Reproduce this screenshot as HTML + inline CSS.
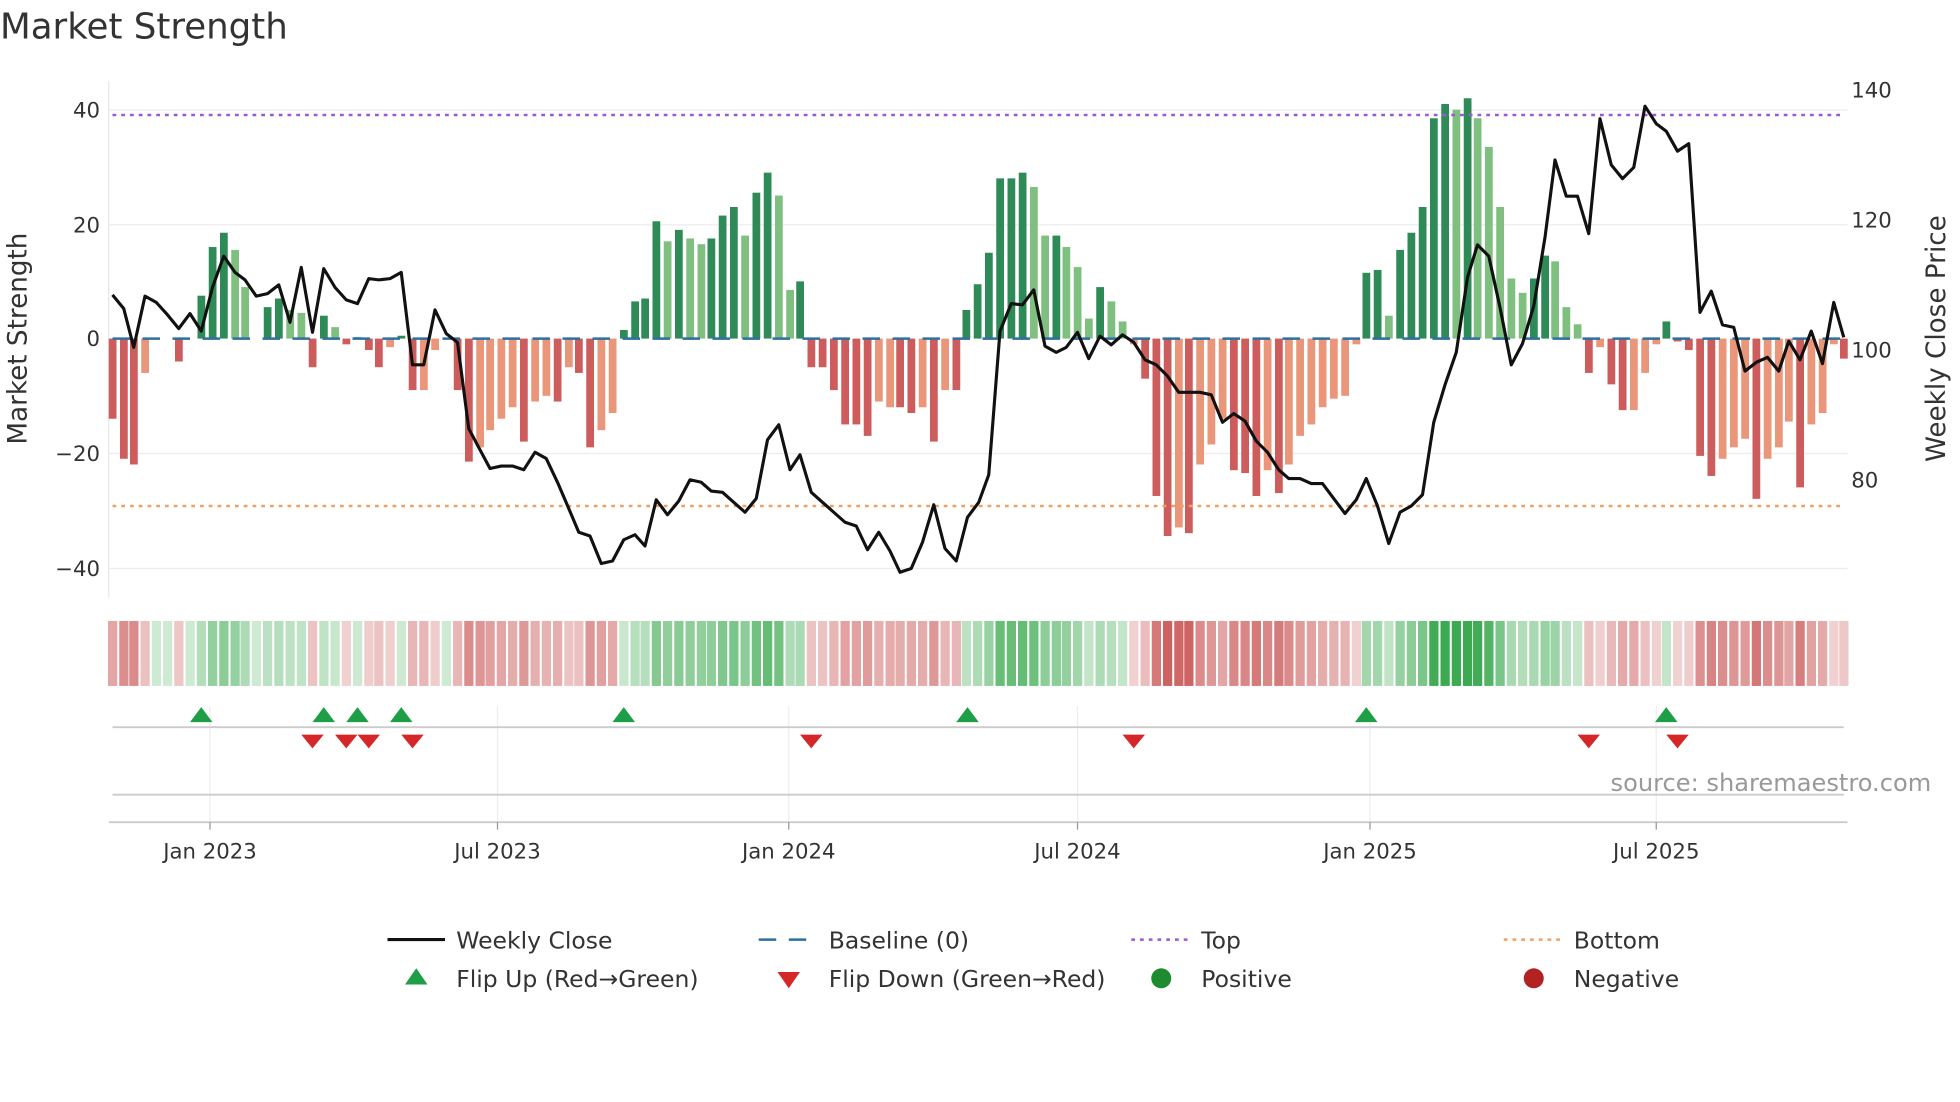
<!DOCTYPE html>
<html><head><meta charset="utf-8"><style>
html,body{margin:0;padding:0;background:#fff;}
svg{display:block;font-family:"DejaVu Sans","Liberation Sans",sans-serif;}
</style></head><body>
<svg id="s" width="1960" height="1102" viewBox="0 0 1568 882" preserveAspectRatio="none" xmlns="http://www.w3.org/2000/svg">
<rect width="1568" height="882" fill="#fff"/>
<text x="0" y="31" font-size="28.5" fill="#333">Market Strength</text>
<g stroke="#ececf0" stroke-width="1">
<line x1="87" y1="88" x2="1478" y2="88"/><line x1="87" y1="180" x2="1478" y2="180"/>
<line x1="87" y1="363" x2="1478" y2="363"/><line x1="87" y1="455" x2="1478" y2="455"/>
</g>
<line x1="87" y1="65" x2="87" y2="478" stroke="#e6e6ea"/>
<g font-size="17" fill="#333" text-anchor="end">
<text x="80" y="94">40</text><text x="80" y="186">20</text><text x="80" y="277">0</text><text x="80" y="369">−20</text><text x="80" y="461">−40</text>
</g>
<g font-size="17" fill="#333">
<text x="1481" y="78">140</text><text x="1481" y="182">120</text><text x="1481" y="286">100</text><text x="1481" y="390">80</text>
</g>
<text transform="translate(21,271) rotate(-90)" font-size="21" fill="#333" text-anchor="middle">Market Strength</text>
<text transform="translate(1556,271) rotate(-90)" font-size="21" fill="#333" text-anchor="middle">Weekly Close Price</text>
<g id="bars"></g>
<line x1="90" y1="271" x2="1475" y2="271" stroke="#2f6fa0" stroke-width="2" stroke-dasharray="14,10"/>
<line x1="90" y1="92" x2="1475" y2="92" stroke="#9b59d6" stroke-width="2" stroke-dasharray="3,4"/>
<line x1="90" y1="405" x2="1475" y2="405" stroke="#f0a060" stroke-width="2" stroke-dasharray="3,4"/>
<polyline id="price" fill="none" stroke="#111" stroke-width="2.5" stroke-linejoin="round"/>
<g id="heat"></g>
<g stroke="#eee"><line x1="168" y1="565" x2="168" y2="658"/><line x1="398" y1="565" x2="398" y2="658"/><line x1="631" y1="565" x2="631" y2="658"/><line x1="862" y1="565" x2="862" y2="658"/><line x1="1096" y1="565" x2="1096" y2="658"/><line x1="1325" y1="565" x2="1325" y2="658"/></g>
<line x1="90" y1="582" x2="1475" y2="582" stroke="#ccc" stroke-width="1.5"/>
<line x1="90" y1="636" x2="1475" y2="636" stroke="#ccc" stroke-width="1.5"/>
<line x1="87" y1="658" x2="1478" y2="658" stroke="#ccc" stroke-width="1.5"/>
<g id="marks"></g>
<text x="1545" y="633" font-size="19.3" fill="#999" text-anchor="end">source: sharemaestro.com</text>
<g stroke="#999"><line x1="168" y1="658" x2="168" y2="664"/><line x1="398" y1="658" x2="398" y2="664"/><line x1="631" y1="658" x2="631" y2="664"/><line x1="862" y1="658" x2="862" y2="664"/><line x1="1096" y1="658" x2="1096" y2="664"/><line x1="1325" y1="658" x2="1325" y2="664"/></g>
<g font-size="17" fill="#333" text-anchor="middle">
<text x="168" y="687">Jan 2023</text><text x="398" y="687">Jul 2023</text><text x="631" y="687">Jan 2024</text><text x="862" y="687">Jul 2024</text><text x="1096" y="687">Jan 2025</text><text x="1325" y="687">Jul 2025</text>
</g>
<g font-size="18.8" fill="#333">
<line x1="310" y1="752" x2="356" y2="752" stroke="#111" stroke-width="2.5"/><text x="365" y="759">Weekly Close</text>
<line x1="607" y1="752" x2="652" y2="752" stroke="#2f6fa0" stroke-width="2" stroke-dasharray="14,10"/><text x="663" y="759">Baseline (0)</text>
<line x1="905" y1="752" x2="950" y2="752" stroke="#9b59d6" stroke-width="2" stroke-dasharray="3,4"/><text x="961" y="759">Top</text>
<line x1="1203" y1="752" x2="1248" y2="752" stroke="#f0a060" stroke-width="2" stroke-dasharray="3,4"/><text x="1259" y="759">Bottom</text>
<polygon points="324,788 342,788 333,775" fill="#1e9e46"/><text x="365" y="790">Flip Up (Red→Green)</text>
<polygon points="622,778 640,778 631,791" fill="#d62728"/><text x="663" y="790">Flip Down (Green→Red)</text>
<circle cx="929" cy="783" r="8" fill="#1e8c2e"/><text x="961" y="790">Positive</text>
<circle cx="1227" cy="783" r="8" fill="#b22222"/><text x="1259" y="790">Negative</text>
</g>
</svg>
<script>
var NS="http://www.w3.org/2000/svg";
function el(t,a,p){var e=document.createElementNS(NS,t);for(var k in a)e.setAttribute(k,a[k]);p.appendChild(e);return e;}
var B=[[90,-14,'d'],[99,-21,'d'],[107,-22,'d'],[116,-6,'l'],[125,0,'l'],[134,0,'l'],[143,-4,'d'],[152,0,'l'],[161,7.5,'d'],[170,16,'d'],[179,18.5,'d'],[188,15.5,'l'],[196,9,'l'],[205,0,'l'],[214,5.5,'d'],[223,7,'d'],[232,5,'l'],[241,4.5,'l'],[250,-5,'d'],[259,4,'d'],[268,2,'l'],[277,-1,'d'],[286,0.3,'l'],[295,-2,'d'],[303,-5,'d'],[312,-1.5,'l'],[321,0.5,'d'],[330,-9,'d'],[339,-9,'l'],[348,-2,'l'],[357,0,'l'],[366,-9,'d'],[375,-21.5,'d'],[384,-19,'l'],[392,-16,'l'],[401,-14,'l'],[410,-12,'l'],[419,-18,'d'],[428,-11,'l'],[437,-10,'l'],[446,-11,'d'],[455,-5,'l'],[463,-6,'d'],[472,-19,'d'],[481,-16,'l'],[490,-13,'l'],[499,1.5,'d'],[508,6.5,'d'],[516,7,'d'],[525,20.5,'d'],[534,17,'l'],[543,19,'d'],[552,17.5,'l'],[561,16.5,'l'],[569,17.5,'d'],[578,21.5,'d'],[587,23,'d'],[596,18,'l'],[605,25.5,'d'],[614,29,'d'],[623,25,'l'],[632,8.5,'l'],[640,10,'d'],[649,-5,'d'],[658,-5,'d'],[667,-9,'d'],[676,-15,'d'],[685,-15,'d'],[694,-17,'d'],[703,-11,'l'],[712,-12,'l'],[720,-12,'d'],[729,-13,'d'],[738,-12,'l'],[747,-18,'d'],[756,-9,'l'],[765,-9,'d'],[773,5,'d'],[782,9.5,'d'],[791,15,'d'],[800,28,'d'],[809,28,'d'],[818,29,'d'],[827,26.5,'l'],[836,18,'l'],[845,18,'d'],[853,16,'l'],[862,12.5,'l'],[871,3.5,'l'],[880,9,'d'],[889,6.5,'l'],[898,3,'l'],[907,-1,'l'],[916,-7,'d'],[925,-27.5,'d'],[934,-34.5,'d'],[943,-33,'l'],[951,-34,'d'],[960,-22,'l'],[969,-18.5,'l'],[978,-14,'l'],[987,-23,'d'],[996,-23.5,'d'],[1005,-27.5,'d'],[1014,-23,'l'],[1023,-27,'d'],[1031,-22,'l'],[1040,-17,'l'],[1049,-15,'l'],[1058,-12,'l'],[1067,-10.5,'l'],[1076,-10,'l'],[1085,-1,'l'],[1093,11.5,'d'],[1102,12,'d'],[1111,4,'l'],[1120,15.5,'d'],[1129,18.5,'d'],[1138,23,'d'],[1147,38.5,'d'],[1156,41,'d'],[1165,40,'l'],[1174,42,'d'],[1182,38.5,'l'],[1191,33.5,'l'],[1200,23,'l'],[1209,10.5,'l'],[1218,8,'l'],[1227,10.5,'d'],[1236,14.5,'d'],[1244,13.5,'l'],[1253,5.5,'l'],[1262,2.5,'l'],[1271,-6,'d'],[1280,-1.5,'l'],[1289,-8,'d'],[1298,-12.5,'d'],[1307,-12.5,'l'],[1316,-6,'l'],[1325,-1,'l'],[1333,3,'d'],[1342,-0.5,'d'],[1351,-2,'d'],[1360,-20.5,'d'],[1369,-24,'d'],[1378,-21,'l'],[1387,-19,'l'],[1396,-17.5,'l'],[1405,-28,'d'],[1414,-21,'l'],[1423,-19,'l'],[1431,-14.5,'l'],[1440,-26,'d'],[1449,-15,'l'],[1458,-13,'l'],[1467,-1,'l'],[1475,-3.5,'d']];
var g=document.getElementById('bars'),h=document.getElementById('heat');
var col={pd:'#2e8b57',pl:'#7fbf7f',nd:'#cd5c5c',nl:'#e9967a'};
for(var i=0;i<B.length;i++){var x=B[i][0],v=B[i][1],t=B[i][2];
 var hh=Math.abs(v)*4.58,c=col[(v>=0?'p':'n')+t];
 if(hh>0.3)el('rect',{x:x-3,y:v>=0?271-hh:271,width:6.2,height:hh,fill:c},g);
 var a=Math.min(1,0.25+Math.abs(v)/40*0.75);
 var hc=v>=0?'rgba(60,170,80,'+a+')':'rgba(200,80,80,'+a+')';
 el('rect',{x:x-3.6,y:497,width:7.4,height:52,fill:hc},h);
}
var P=[[90,236],[99,247],[107,278],[116,237],[125,242],[134,252],[143,263],[152,251],[161,265],[170,230],[179,205],[188,218],[196,224],[205,237],[214,235],[223,228],[232,258],[241,214],[250,266],[259,215],[268,230],[277,240],[286,243],[295,223],[303,224],[312,223],[321,218],[330,292],[339,292],[348,248],[357,267],[366,274],[375,343],[384,360],[392,375],[401,373],[410,373],[419,376],[428,362],[437,367],[446,386],[455,407],[463,426],[472,429],[481,451],[490,449],[499,432],[508,428],[516,437],[525,400],[534,412],[543,401],[552,384],[561,386],[569,393],[578,394],[587,402],[596,410],[605,399],[614,352],[623,340],[632,376],[640,364],[649,394],[658,402],[667,410],[676,418],[685,421],[694,440],[703,426],[712,441],[720,458],[729,455],[738,434],[747,404],[756,439],[765,449],[774,414],[783,402],[791,380],[800,265],[809,243],[818,244],[827,232],[836,277],[845,282],[853,278],[862,266],[871,287],[880,269],[889,276],[898,268],[907,274],[916,288],[925,292],[934,301],[943,314],[951,314],[960,314],[969,316],[978,338],[987,331],[996,337],[1005,353],[1014,362],[1023,376],[1031,383],[1040,383],[1049,387],[1058,387],[1067,399],[1076,411],[1085,400],[1093,383],[1102,405],[1111,435],[1120,410],[1129,405],[1138,396],[1147,338],[1156,308],[1165,282],[1174,222],[1182,196],[1191,205],[1200,246],[1209,292],[1218,275],[1227,245],[1236,190],[1244,128],[1253,157],[1262,157],[1271,187],[1280,95],[1289,132],[1298,143],[1307,134],[1316,85],[1325,99],[1333,105],[1342,121],[1351,115],[1360,250],[1369,233],[1378,260],[1387,262],[1396,297],[1405,290],[1414,286],[1423,297],[1431,273],[1440,288],[1449,265],[1458,291],[1467,242],[1475,270]];
document.getElementById('price').setAttribute('points',P.map(function(p){return p.join(',')}).join(' '));
var m=document.getElementById('marks');
[161,259,286,321,499,774,1093,1333].forEach(function(x){el('polygon',{points:(x-9)+',578 '+(x+9)+',578 '+x+',566',fill:'#1e9e46'},m);});
[250,277,295,330,649,907,1271,1342].forEach(function(x){el('polygon',{points:(x-9)+',588 '+(x+9)+',588 '+x+',599',fill:'#d62728'},m);});
</script>
</body></html>
